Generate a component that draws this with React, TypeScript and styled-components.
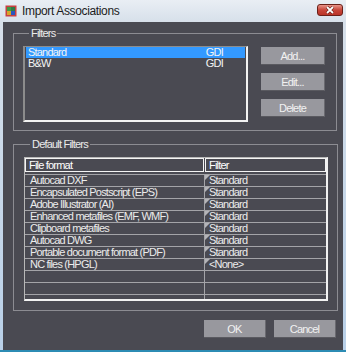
import styled, { createGlobalStyle } from 'styled-components';

const GlobalStyle = createGlobalStyle`
  html, body {
    margin: 0;
    padding: 0;
    background: #4a4a52;
  }
  body {
    font-family: "Liberation Sans", Arial, sans-serif;
  }
`;

const Window = styled.div`
  width: 346px;
  height: 352px;
  box-sizing: border-box;
  display: flex;
  flex-direction: column;
  background: linear-gradient(#e9eef4, #d7e0ea 22px, #b9d0e8);
  border-bottom: 2px solid #2c8cb4;
`;

const TitleBar = styled.div`
  height: 22px;
  flex: none;
  display: flex;
  align-items: center;
  padding: 0 3px 0 5px;
  gap: 5px;
`;

const Title = styled.span`
  flex: 1;
  font-size: 12px;
  letter-spacing: -0.35px;
  color: #1c1c1c;
`;

const CloseButton = styled.div`
  width: 26px;
  height: 12px;
  box-sizing: border-box;
  border: 1px solid #6a2018;
  border-radius: 3px;
  background: linear-gradient(#e8958a, #c8463a 50%, #b93428);
  display: flex;
  align-items: center;
  justify-content: center;
  margin-top: -2px;
`;

const Body = styled.div`
  flex: 1;
  margin: 0 3px;
  background: #4a4a52;
  display: flex;
  flex-direction: column;
  color: #ececec;
  font-size: 11px;
  letter-spacing: -0.8px;
`;

const Group = styled.fieldset<{ $top: number; $right: number; $pad: string }>`
  margin: ${(p) => p.$top}px ${(p) => p.$right}px 0 10px;
  padding: ${(p) => p.$pad};
  border: 1px solid #8c8c92;
  min-inline-size: 0;
`;

const Legend = styled.legend`
  margin-left: 6px;
  padding: 0 2px;
  line-height: 13px;
  color: #ececec;
`;

const FiltersRow = styled.div`
  display: flex;
  gap: 13px;
`;

const ListBox = styled.div`
  width: 225px;
  height: 76px;
  box-sizing: border-box;
  border-top: 1px solid #8c8c8c;
  border-left: 2px solid #8c8c8c;
  border-right: 2px solid #f2f2f2;
  border-bottom: 2px solid #f2f2f2;
  padding: 0 1px;
`;

const ListRow = styled.div<{ $selected?: boolean }>`
  display: flex;
  justify-content: space-between;
  height: 11px;
  line-height: 11px;
  padding: 0 22px 0 2px;
  background: ${(p) => (p.$selected ? '#3399ff' : 'transparent')};
  color: #f4f4f4;
`;

const ButtonColumn = styled.div`
  display: flex;
  flex-direction: column;
  gap: 8px;
  padding-top: 1px;
`;

const Button = styled.button<{ $width: number }>`
  width: ${(p) => p.$width}px;
  height: 18px;
  padding: 0;
  border: none;
  border-bottom: 1px solid #5a5a60;
  border-right: 1px solid #6a6a70;
  background: #98989e;
  color: #f2f2f2;
  font-family: "Liberation Sans", Arial, sans-serif;
  font-size: 11px;
  letter-spacing: -0.8px;
`;

const Table = styled.div`
  height: 144px;
  box-sizing: border-box;
  border-top: 1px solid #b8b8b8;
  border-left: 1px solid #b8b8b8;
  border-right: 2px solid #f2f2f2;
  border-bottom: 2px solid #f2f2f2;
  overflow: hidden;
`;

const HeaderRow = styled.div`
  display: grid;
  grid-template-columns: 179px 1fr;
  gap: 1px;
  height: 14px;
  margin-bottom: 2px;
`;

const HeaderCell = styled.div`
  border: 1px solid #f4f4f4;
  line-height: 12px;
  padding-left: 3px;
  color: #ffffff;
`;

const Row = styled.div`
  display: grid;
  grid-template-columns: 180px 1fr;
  height: 12px;
  box-sizing: border-box;
  border-top: 1px solid #a4a4a8;
  line-height: 11px;
`;

const NameCell = styled.div`
  border-right: 1px solid #a4a4a8;
  padding-left: 5px;
  white-space: nowrap;
`;

const FilterCell = styled.div`
  white-space: nowrap;
`;

const Corner = styled.span`
  display: inline-block;
  width: 0;
  height: 0;
  border-top: 5px solid #b4b4b8;
  border-right: 5px solid transparent;
  vertical-align: top;
  margin-right: -1px;
`;

const Footer = styled.div`
  display: flex;
  justify-content: flex-end;
  gap: 8px;
  margin: 9px 7px 0 0;
`;

const AppIcon = () => (
  <svg width="12" height="12" viewBox="0 0 12 12">
    <rect x="0.5" y="0.5" width="11" height="11" fill="#c84040" />
    <rect x="2" y="2" width="4" height="4" fill="#3f9a44" />
    <rect x="6" y="2" width="4" height="4" fill="#2f7a48" />
    <rect x="2" y="6" width="4" height="4" fill="#d6a42a" />
    <rect x="6" y="6" width="4" height="4" fill="#2a56c0" />
  </svg>
);

const rows: [string, string][] = [
  ['Autocad DXF', 'Standard'],
  ['Encapsulated Postscript (EPS)', 'Standard'],
  ['Adobe Illustrator (AI)', 'Standard'],
  ['Enhanced metafiles (EMF, WMF)', 'Standard'],
  ['Clipboard metafiles', 'Standard'],
  ['Autocad DWG', 'Standard'],
  ['Portable document format (PDF)', 'Standard'],
  ['NC files (HPGL)', '<None>'],
  ['', ''],
  ['', ''],
  ['', ''],
];

export default function App() {
  return (
    <>
      <GlobalStyle />
      <Window>
        <TitleBar>
          <AppIcon />
          <Title>Import Associations</Title>
          <CloseButton>
            <svg width="10" height="8" viewBox="0 0 10 8">
              <path d="M2 1 L8 7 M8 1 L2 7" stroke="#5a1810" strokeWidth="3" />
              <path d="M2 1 L8 7 M8 1 L2 7" stroke="#ffffff" strokeWidth="1.8" />
            </svg>
          </CloseButton>
        </TitleBar>
        <Body>
          <Group $top={5} $right={6} $pad="6px 10px 8px 9px">
            <Legend>Filters</Legend>
            <FiltersRow>
              <ListBox>
                <ListRow $selected>
                  <span>Standard</span>
                  <span>GDI</span>
                </ListRow>
                <ListRow>
                  <span>B&amp;W</span>
                  <span>GDI</span>
                </ListRow>
              </ListBox>
              <ButtonColumn>
                <Button $width={64}>Add...</Button>
                <Button $width={64}>Edit...</Button>
                <Button $width={64}>Delete</Button>
              </ButtonColumn>
            </FiltersRow>
          </Group>
          <Group $top={7} $right={5} $pad="6px 9px 9px 10px">
            <Legend>Default Filters</Legend>
            <Table>
              <HeaderRow>
                <HeaderCell>File format</HeaderCell>
                <HeaderCell>Filter</HeaderCell>
              </HeaderRow>
              {rows.map(([name, filter], i) => (
                <Row key={i}>
                  <NameCell>{name}</NameCell>
                  <FilterCell>
                    {filter && <Corner />}
                    {filter}
                  </FilterCell>
                </Row>
              ))}
            </Table>
          </Group>
          <Footer>
            <Button $width={62}>OK</Button>
            <Button $width={62}>Cancel</Button>
          </Footer>
        </Body>
      </Window>
    </>
  );
}
